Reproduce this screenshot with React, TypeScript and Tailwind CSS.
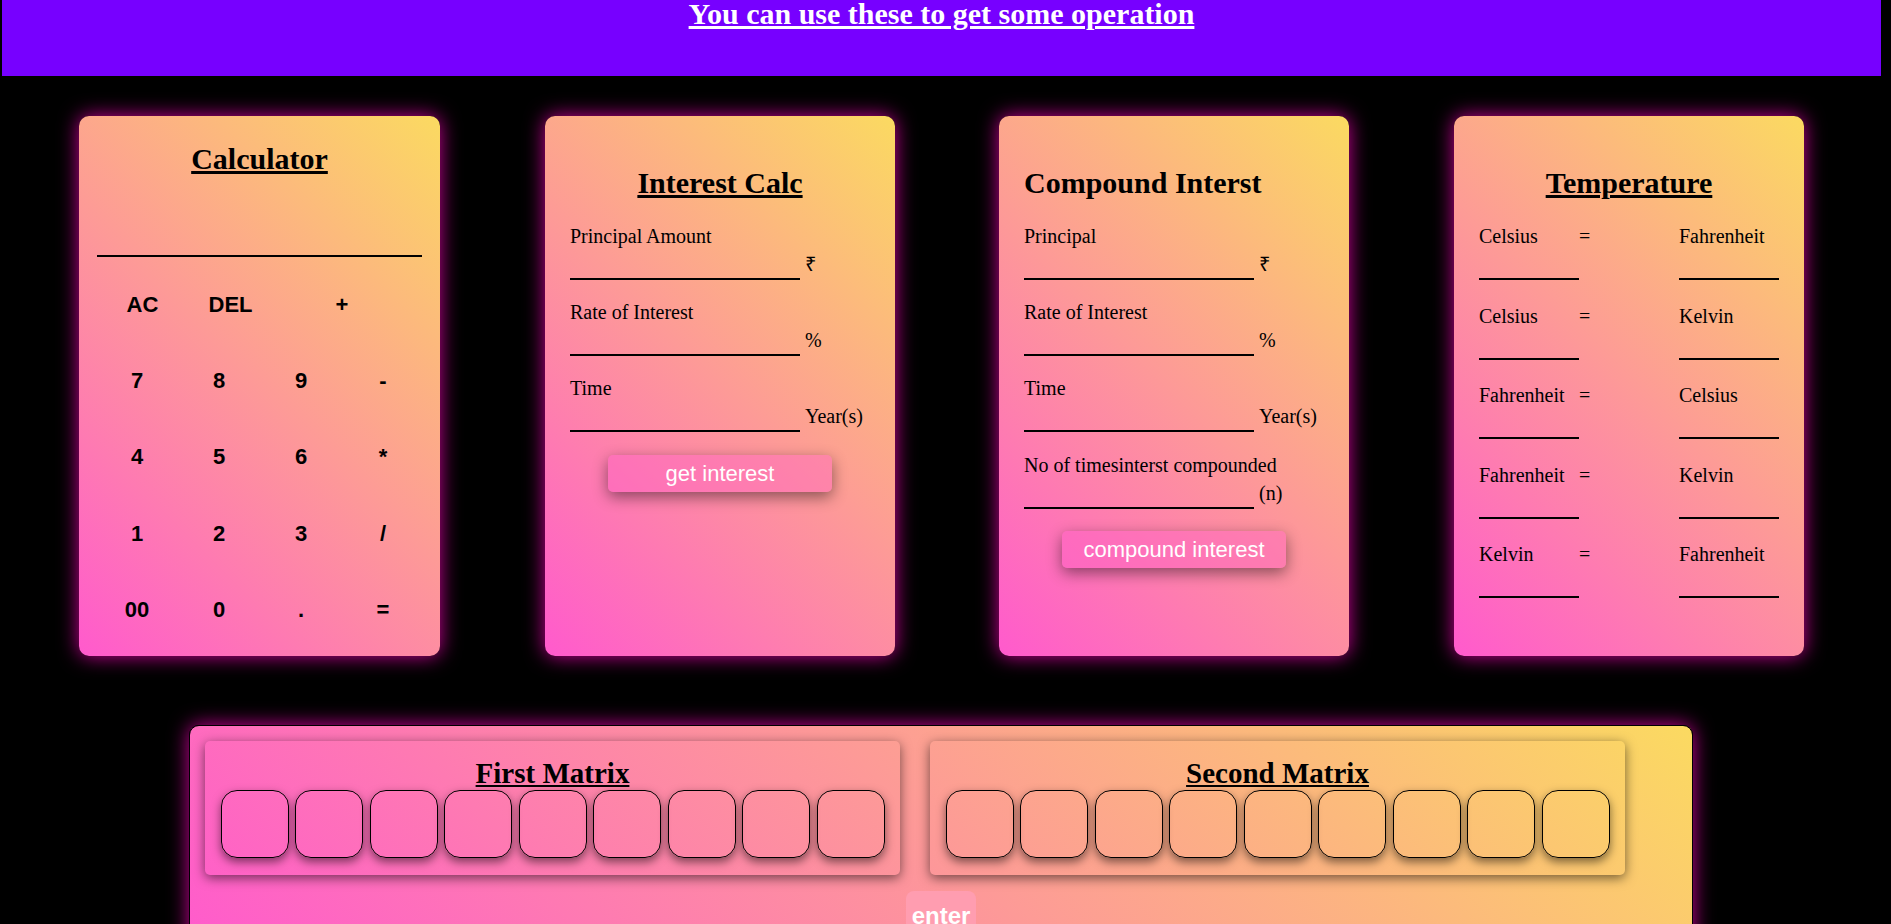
import React from 'react';

const serif = "font-['Liberation_Serif','Times_New_Roman',serif]";
const sans = "font-['Liberation_Sans',Arial,sans-serif]";
const card =
  'rounded-[10px] bg-[linear-gradient(45deg,#ff5acd_0%,#fbda61_100%)] shadow-[0_0_20px_rgba(255,0,190,0.8)]';
const pinkBtn =
  "mx-auto mt-[1px] block h-[37px] w-[224px] rounded-[5px] bg-[rgba(255,90,205,0.35)] text-[22px] leading-[37px] text-white shadow-[0_5px_15px_rgba(0,0,0,0.45)] font-['Liberation_Sans',Arial,sans-serif]";

const calcRows = [
  ['7', '8', '9', '-'],
  ['4', '5', '6', '*'],
  ['1', '2', '3', '/'],
  ['00', '0', '.', '='],
];

const Field = ({ label, suffix }: { label: string; suffix: string }) => (
  <div className="h-[76.2px]">
    <div className="h-[23px] leading-[23px]">{label}</div>
    <div className="flex h-[32px] items-end">
      <div className="h-[32px] w-[230px] border-b-2 border-black" />
      <span className="mb-[4px] ml-[5px] leading-[23px]">{suffix}</span>
    </div>
  </div>
);

const tempRows = [
  ['Celsius', 'Fahrenheit'],
  ['Celsius', 'Kelvin'],
  ['Fahrenheit', 'Celsius'],
  ['Fahrenheit', 'Kelvin'],
  ['Kelvin', 'Fahrenheit'],
];

const Matrix = ({ title, className = '' }: { title: string; className?: string }) => (
  <div
    className={`mt-[15px] h-[134px] w-[695px] rounded-[5px] px-[15px] pt-[16px] shadow-[0_3px_12px_rgba(0,0,0,0.55)] ${className}`}
  >
    <h2 className={`${serif} text-center text-[29px] leading-[33px] font-bold underline`}>{title}</h2>
    <div className="flex justify-center gap-[6.5px]">
      {Array.from({ length: 9 }).map((_, i) => (
        <div
          key={i}
          className="h-[68px] w-[68px] rounded-[16px] border border-black shadow-[0_4px_10px_rgba(0,0,0,0.5)]"
        />
      ))}
    </div>
  </div>
);

const App: React.FC = () => {
  return (
    <div className={`h-[924px] overflow-hidden bg-black text-black ${serif}`}>
      <header className="ml-[2px] h-[77px] w-[1879px] bg-[#7700ff] text-center">
        <h2 className="-mt-px text-[30px] leading-[30px] font-bold text-white underline">
          You can use these to get some operation
        </h2>
      </header>

      <div className="mt-[40px] flex pl-[79px] text-[20px]">
        {/* calculator */}
        <div className={`${card} h-[540px] w-[361px] pt-[26px]`}>
          <h2 className="text-center text-[30px] leading-[34px] font-bold underline">Calculator</h2>
          <div className="mx-[18px] mt-[39px] h-[42px] border-b-2 border-black" />
          <div className={`${sans} ml-[17px] mt-[9px] grid w-[328px] grid-cols-4 auto-rows-[76.3px] text-[22px] font-bold`}>
            <div className="flex items-center justify-center pl-[11px]">AC</div>
            <div className="flex items-center justify-center pl-[23px]">DEL</div>
            <div className="col-span-2 flex items-center justify-center">+</div>
            {calcRows.flat().map((k, i) => (
              <div key={i} className="flex items-center justify-center">
                {k}
              </div>
            ))}
          </div>
        </div>

        {/* simple interest */}
        <div className={`${card} ml-[105px] h-[540px] w-[350px] px-[25px] pt-[50px]`}>
          <h2 className="mb-[25px] text-center text-[30px] leading-[34px] font-bold underline">Interest Calc</h2>
          <Field label="Principal Amount" suffix="₹" />
          <Field label="Rate of Interest" suffix="%" />
          <Field label="Time" suffix="Year(s)" />
          <button className={pinkBtn}>get interest</button>
        </div>

        {/* compound interest */}
        <div className={`${card} ml-[104px] h-[540px] w-[350px] px-[25px] pt-[50px]`}>
          <h2 className="mb-[25px] text-[30px] leading-[34px] font-bold">Compound Interst</h2>
          <Field label="Principal" suffix="₹" />
          <Field label="Rate of Interest" suffix="%" />
          <Field label="Time" suffix="Year(s)" />
          <Field label="No of timesinterst compounded" suffix="(n)" />
          <button className={pinkBtn}>compound interest</button>
        </div>

        {/* temperature */}
        <div className={`${card} ml-[105px] h-[540px] w-[350px] px-[25px] pt-[50px]`}>
          <h2 className="mb-[25px] text-center text-[30px] leading-[34px] font-bold underline">Temperature</h2>
          {tempRows.map(([from, to], i) => (
            <div key={i} className="flex h-[79.6px]">
              <div className="w-[100px]">
                <div className="h-[23px] leading-[23px]">{from}</div>
                <div className="h-[32px] border-b-2 border-black" />
              </div>
              <div className="h-[23px] w-[100px] leading-[23px]">=</div>
              <div className="w-[100px]">
                <div className="h-[23px] leading-[23px]">{to}</div>
                <div className="h-[32px] border-b-2 border-black" />
              </div>
            </div>
          ))}
        </div>
      </div>

      {/* matrix */}
      <div className={`${card} ml-[189px] mt-[69px] w-[1504px] rounded-[5px] border border-black pb-[20px]`}>
        <div className="flex">
          <Matrix title="First Matrix" className="ml-[15px]" />
          <Matrix title="Second Matrix" className="ml-[30px]" />
        </div>
        <div className="mt-[16px] flex justify-center">
          <button className={`${sans} h-[44px] rounded-[8px] bg-[#ff9db0] px-[6px] pt-[5px] text-[24px] leading-[39px] font-bold text-white`}>
            enter
          </button>
        </div>
      </div>
    </div>
  );
};

export default App;
